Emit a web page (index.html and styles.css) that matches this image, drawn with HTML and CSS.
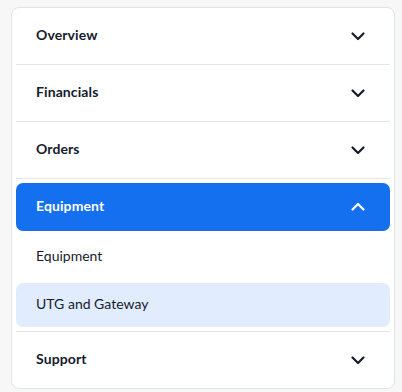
FILE: index.html
```html
<!DOCTYPE html>
<html lang="en">
<head>
    <meta charset="UTF-8">
    <meta name="viewport" content="width=device-width, initial-scale=1.0">
    <title>Account Menu</title>
    <link rel="stylesheet" href="styles.css">
</head>
<body>
    <div class="menu">
        <div class="section">
            <div class="section-header">
                <span>Overview</span>
                <svg class="chevron" viewBox="0 0 24 24"><path d="M6.5 9.5l5.5 5.5 5.5-5.5"/></svg>
            </div>
        </div>
        <div class="section">
            <div class="section-header">
                <span>Financials</span>
                <svg class="chevron" viewBox="0 0 24 24"><path d="M6.5 9.5l5.5 5.5 5.5-5.5"/></svg>
            </div>
        </div>
        <div class="section">
            <div class="section-header">
                <span>Orders</span>
                <svg class="chevron" viewBox="0 0 24 24"><path d="M6.5 9.5l5.5 5.5 5.5-5.5"/></svg>
            </div>
        </div>
        <div class="section open">
            <div class="section-header active">
                <span>Equipment</span>
                <svg class="chevron" viewBox="0 0 24 24"><path d="M6.5 14.5l5.5-5.5 5.5 5.5"/></svg>
            </div>
            <div class="sub-list">
                <div class="sub-item">Equipment</div>
                <div class="sub-item selected">UTG and Gateway</div>
            </div>
        </div>
        <div class="section">
            <div class="section-header">
                <span>Support</span>
                <svg class="chevron" viewBox="0 0 24 24"><path d="M6.5 9.5l5.5 5.5 5.5-5.5"/></svg>
            </div>
        </div>
    </div>
</body>
</html>
```

FILE: styles.css
```css
body {
    font-family: Lato, "Noto Sans", sans-serif;
    background-color: #f7f7f8;
    color: #161b2e;
    margin: 0;
    padding: 7px 7px 0 11px;
}

.menu {
    background-color: white;
    border: 1px solid #dfe3ea;
    border-radius: 8px;
    padding: 0 4px;
}

.section {
    border-bottom: 1px solid #e3e5e8;
}

.section:last-child {
    border-bottom: none;
}

.section.open {
    padding: 4px 0;
}

.section-header {
    box-sizing: border-box;
    display: flex;
    align-items: center;
    justify-content: space-between;
    height: 56px;
    padding: 0 20px 3px;
    font-size: 14px;
    font-weight: bold;
    letter-spacing: 0.1px;
}

.section-header.active {
    height: 48px;
    background-color: #1570ef;
    color: white;
    border-radius: 7px;
}

.chevron {
    width: 24px;
    height: 24px;
    margin-top: 2px;
    fill: none;
    stroke: currentColor;
    stroke-width: 2.2;
    stroke-linecap: round;
    stroke-linejoin: round;
}

.sub-list {
    display: flex;
    flex-direction: column;
    gap: 4px;
    padding-top: 4px;
}

.sub-item {
    box-sizing: border-box;
    display: flex;
    align-items: center;
    height: 44px;
    padding: 0 20px 3px;
    font-size: 14px;
    border-radius: 7px;
}

.sub-item.selected {
    background-color: #e1edfe;
}
```
